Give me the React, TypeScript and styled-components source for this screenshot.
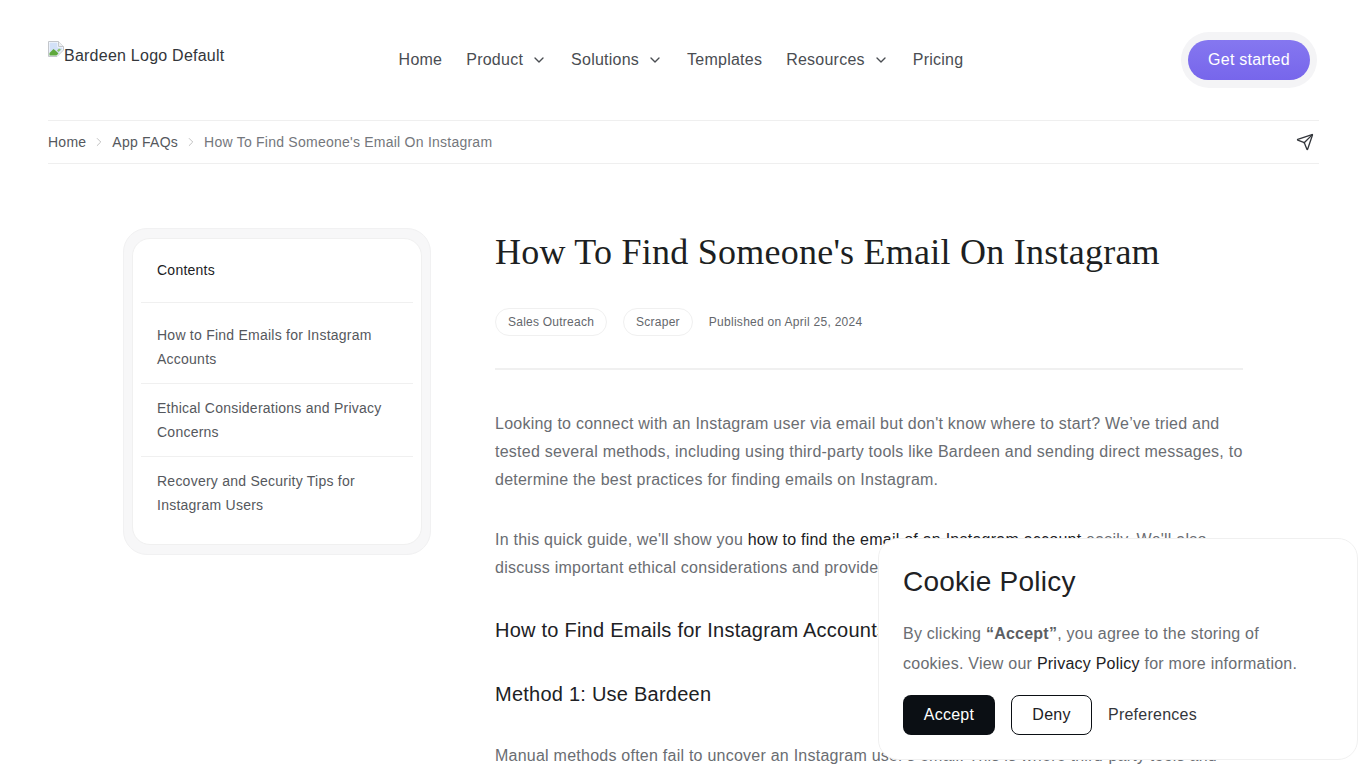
import React from "react";
import styled, { createGlobalStyle } from "styled-components";
import { ChevronDown, ChevronRight, Send } from "lucide-react";

const GlobalStyle = createGlobalStyle`
  html, body {
    margin: 0;
    height: 768px;
    overflow: hidden;
    background: #fff;
  }
  * {
    box-sizing: border-box;
  }
  body {
    font-family: "Liberation Sans", Arial, sans-serif;
    letter-spacing: 0.24px;
    color: #202124;
  }
`;

const navItems = [
  { label: "Home" },
  { label: "Product", menu: true },
  { label: "Solutions", menu: true },
  { label: "Templates" },
  { label: "Resources", menu: true },
  { label: "Pricing" },
];

const contents = [
  "How to Find Emails for Instagram Accounts",
  "Ethical Considerations and Privacy Concerns",
  "Recovery and Security Tips for Instagram Users",
];

const BrokenImage = () => (
  <svg width="16" height="16" viewBox="0 0 16 16">
    <path d="M0.5 0.5H10.5L15.5 5.5V9L9 15.5H0.5Z" fill="#fff" stroke="#c3c6cb" />
    <path d="M10.5 0.5V5.5H15.5" fill="#eef0f2" stroke="#c3c6cb" />
    <path d="M1.5 1.5H9.5V6.5H14.5V8.5L8.5 14.5H1.5Z" fill="#d3e1f8" />
    <path d="M1.5 14.5V12L5.5 8L8 10L10.5 12.5L8.5 14.5Z" fill="#5fa83c" />
    <path d="M9 9.5L11 7.5L13 8.5L10.5 11Z" fill="#8cc46a" />
  </svg>
);

export default function App() {
  return (
    <Page>
      <GlobalStyle />
      <Header>
        <Logo>
          <BrokenImage />
          <span>Bardeen Logo Default</span>
        </Logo>
        <Nav>
          {navItems.map((item) => (
            <NavLink key={item.label}>
              {item.label}
              {item.menu && <ChevronDown size={16} strokeWidth={2} />}
            </NavLink>
          ))}
        </Nav>
        <CtaRing>
          <Cta>Get started</Cta>
        </CtaRing>
      </Header>

      <Crumbs>
        <CrumbLink>Home</CrumbLink>
        <ChevronRight size={14} color="#b8b8b8" strokeWidth={1.5} />
        <CrumbLink>App FAQs</CrumbLink>
        <ChevronRight size={14} color="#b8b8b8" strokeWidth={1.5} />
        <CrumbCurrent>How To Find Someone's Email On Instagram</CrumbCurrent>
        <ShareIcon>
          <Send size={18} color="#33363b" strokeWidth={1.75} />
        </ShareIcon>
      </Crumbs>

      <Columns>
        <Toc>
          <TocInner>
            <TocTitle>Contents</TocTitle>
            <TocList>
              {contents.map((text, i) => (
                <TocItem key={text} $last={i === contents.length - 1}>
                  {text}
                </TocItem>
              ))}
            </TocList>
          </TocInner>
        </Toc>

        <Article>
          <Title>How To Find Someone's Email On Instagram</Title>
          <Meta>
            <Tag>Sales Outreach</Tag>
            <Tag>Scraper</Tag>
            <Published>Published on April 25, 2024</Published>
          </Meta>
          <Rule />
          <Paragraph>
            Looking to connect with an Instagram user via email but don't know where to start? We’ve
            tried and tested several methods, including using third-party tools like Bardeen and
            sending direct messages, to determine the best practices for finding emails on Instagram.
          </Paragraph>
          <Paragraph>
            In this quick guide, we'll show you <Dark>how to find the email of an Instagram account</Dark>{" "}
            easily. We'll also discuss important ethical considerations and provide recovery tips for
            your account.
          </Paragraph>
          <SectionTitle>How to Find Emails for Instagram Accounts</SectionTitle>
          <MethodTitle>Method 1: Use Bardeen</MethodTitle>
          <Paragraph>
            Manual methods often fail to uncover an Instagram user's email. This is where third-party
            tools and automation can help you find the right address faster.
          </Paragraph>
        </Article>
      </Columns>

      <CookieCard>
        <CookieTitle>Cookie Policy</CookieTitle>
        <CookieText>
          By clicking <strong>“Accept”</strong>, you agree to the storing of cookies. View our{" "}
          <Dark>Privacy Policy</Dark> for more information.
        </CookieText>
        <CookieActions>
          <AcceptButton>Accept</AcceptButton>
          <DenyButton>Deny</DenyButton>
          <PrefButton>Preferences</PrefButton>
        </CookieActions>
      </CookieCard>
    </Page>
  );
}

const Page = styled.div`
  padding: 0 47px 0 48px;
`;

const Header = styled.header`
  height: 120px;
  display: grid;
  grid-template-columns: 1fr auto 1fr;
  align-items: start;
`;

const Logo = styled.div`
  display: flex;
  align-items: flex-start;
  padding-top: 41px;
  font-size: 16px;
  line-height: 18px;
  color: #33363b;

  span {
    margin-top: 6px;
  }
`;

const Nav = styled.nav`
  display: flex;
  gap: 24px;
  padding-top: 50px;
  margin-right: 5px;
`;

const NavLink = styled.a`
  display: flex;
  align-items: center;
  gap: 8px;
  font-size: 16px;
  line-height: 19px;
  color: #4a4d52;

  svg {
    color: #4a4d52;
  }
`;

const CtaRing = styled.div`
  justify-self: end;
  margin: 32px 2px 0 0;
  padding: 8px 7px;
  border-radius: 30px;
  background: #f4f4f6;
`;

const Cta = styled.button`
  display: block;
  width: 122px;
  height: 40px;
  padding: 0;
  border: 0;
  border-radius: 20px;
  background: linear-gradient(180deg, #8577f0 0%, #7766eb 100%);
  color: #fff;
  font-family: inherit;
  font-size: 16px;
  letter-spacing: inherit;
`;

const Crumbs = styled.div`
  height: 44px;
  display: flex;
  align-items: center;
  gap: 6px;
  border-top: 1px solid #efefef;
  border-bottom: 1px solid #efefef;
  font-size: 14px;
`;

const CrumbLink = styled.a`
  color: #55585d;
`;

const CrumbCurrent = styled.span`
  color: #74777c;
`;

const ShareIcon = styled.span`
  display: flex;
  margin-left: auto;
  margin-right: 5px;
`;

const Columns = styled.main`
  display: flex;
  align-items: flex-start;
  gap: 64px;
  padding: 64px 0 0 75px;
`;

const Toc = styled.aside`
  width: 308px;
  flex: none;
  padding: 9px;
  border-radius: 24px;
  background: #f7f7f8;
  border: 1px solid #f1f1f2;
`;

const TocInner = styled.div`
  margin: 0 -1px;
  padding: 8px 8px 15px;
  border-radius: 18px;
  background: #fff;
  border: 1px solid #f0f0f0;
`;

const TocTitle = styled.div`
  padding: 13px 16px 22px;
  height: 56px;
  border-bottom: 1px solid #f0f0f0;
  font-size: 14px;
  line-height: 20px;
  color: #202124;
`;

const TocList = styled.div`
  padding-top: 20px;
`;

const TocItem = styled.div<{ $last?: boolean }>`
  padding: 0 16px 12px;
  margin-bottom: 12px;
  font-size: 14px;
  line-height: 24px;
  color: #55585d;
  border-bottom: ${(p) => (p.$last ? "0" : "1px solid #f0f0f0")};
  ${(p) => p.$last && "margin-bottom: 0;"}
`;

const Article = styled.article`
  width: 748px;
  flex: none;
`;

const Title = styled.h1`
  margin: 0;
  font-family: "Liberation Serif", "Times New Roman", serif;
  font-size: 36px;
  line-height: 48px;
  font-weight: 400;
  color: #1d1f22;
`;

const Meta = styled.div`
  display: flex;
  align-items: flex-start;
  gap: 16px;
  margin-top: 32px;
`;

const Tag = styled.span`
  height: 28px;
  padding: 0 12px;
  display: flex;
  align-items: center;
  border: 1px solid #f0f0f0;
  border-radius: 14px;
  font-size: 12px;
  color: #64676c;
`;

const Published = styled.span`
  font-size: 12px;
  line-height: 28px;
  letter-spacing: 0.28px;
  color: #64676c;
`;

const Rule = styled.div`
  height: 2px;
  margin-top: 32px;
  background: #f0f0f0;
`;

const Paragraph = styled.p`
  margin: 0 0 32px;
  font-size: 16px;
  line-height: 28px;
  color: #6a6d72;

  ${Rule} + & {
    margin-top: 40px;
  }
`;

const Dark = styled.span`
  color: #202124;
`;

const SectionTitle = styled.h2`
  margin: 0 0 32px;
  font-size: 20px;
  line-height: 32px;
  font-weight: 400;
  color: #202124;
`;

const MethodTitle = styled(SectionTitle)`
  margin-bottom: 32px;
`;

const CookieCard = styled.div`
  position: fixed;
  left: 878px;
  top: 538px;
  width: 480px;
  height: 222px;
  padding: 24px;
  background: #fff;
  border: 1px solid #f0f0f0;
  border-radius: 20px;
`;

const CookieTitle = styled.div`
  font-size: 28px;
  line-height: 38px;
  color: #202124;
`;

const CookieText = styled.p`
  max-width: 400px;
  margin: 18px 0 0;
  font-size: 16px;
  line-height: 30px;
  color: #6a6d72;

  strong {
    color: #5c5f64;
  }
`;

const CookieActions = styled.div`
  display: flex;
  gap: 16px;
  margin-top: 16px;
`;

const AcceptButton = styled.button`
  width: 92px;
  height: 40px;
  padding: 0;
  border: 0;
  border-radius: 8px;
  background: #0b0f14;
  color: #fff;
  font-family: inherit;
  font-size: 16px;
  letter-spacing: inherit;
`;

const DenyButton = styled.button`
  width: 81px;
  height: 40px;
  padding: 0;
  border: 1px solid #0b0f14;
  border-radius: 8px;
  background: #fff;
  color: #202124;
  font-family: inherit;
  font-size: 16px;
  letter-spacing: inherit;
`;

const PrefButton = styled.button`
  padding: 0;
  border: 0;
  background: none;
  color: #33363b;
  font-family: inherit;
  font-size: 16px;
  letter-spacing: inherit;
`;
